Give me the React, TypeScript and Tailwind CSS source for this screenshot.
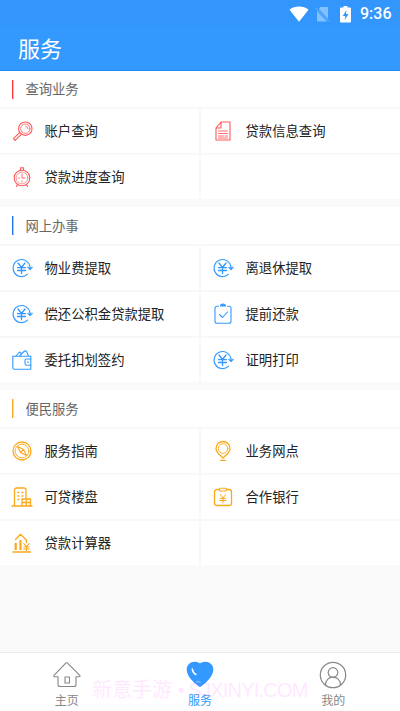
import React from 'react';

type IconName = 'search' | 'doc' | 'clock' | 'yen' | 'clip' | 'wallet' | 'compass' | 'pin' | 'building' | 'bank' | 'chart';

const shapes: Record<IconName, React.ReactNode> = {
  search: (
    <>
      <circle cx="14.3" cy="8.7" r="6.7" />
      <circle cx="14.3" cy="8.7" r="4.7" strokeWidth="0.8" />
      <path d="M14.5 6.2a2.6 2.6 0 0 1 2.5 2.6" strokeWidth="0.8" />
      <path d="M8.8 12.4 2.4 18.6l1.7 1.8 6.6-6.2" />
    </>
  ),
  doc: (
    <>
      <path d="M9 2h9v18H4V8zM9 2v6H4" />
      <path d="M6.5 11h9M6.5 13.5h9M6.5 16h5M13 16h2.5M6.5 18h9" strokeWidth="0.9" />
    </>
  ),
  clock: (
    <>
      <circle cx="11" cy="12" r="7.8" />
      <circle cx="11" cy="12" r="5.9" strokeWidth="0.6" />
      <path d="M9.5 4V1.8h3V4M6.5 18.5l-1 2M15.5 18.5l1 2" />
      <path d="M11 8v4h3M7.5 12h1M11 15v1" strokeWidth="0.9" />
    </>
  ),
  yen: (
    <>
      <path d="M19 10A8.5 8.5 0 1 0 16.5 17.2" />
      <path d="m16.5 10.5 2.6 2.6 2.4-2.6z" fill="currentColor" strokeWidth="0.6" />
      <path d="M7 6l3.5 4.5L14 6M6.5 10.7h8M6.5 13.5h8M10.5 10.5v6" strokeWidth="1.3" />
    </>
  ),
  clip: (
    <>
      <path d="M6.5 3.3H5A2 2 0 0 0 3 5.3v13a2 2 0 0 0 2 2h12a2 2 0 0 0 2-2v-13a2 2 0 0 0-2-2h-1.5" />
      <path d="M8.5 3h5a2.5 2 0 0 0-5 0z" fill="currentColor" />
      <path d="m7.5 11.5 3 3 5-5.5" />
    </>
  ),
  wallet: (
    <>
      <path d="M19.8 10V7.2h-18v11.5a1.5 1.5 0 0 0 1.5 1.5h16.500v-4" />
      <path d="M19.8 10H15.5a1.5 1.5 0 0 0-1.5 1.5v3.2a1.5 1.5 0 0 0 1.5 1.5h4.3zM16.5 13.1h.8" />
      <path d="m5 7 3.5-4 2.2 1.8M8.5 7 13 2.5c1-.8 1.7-.8 2.5 0L17.5 7" />
    </>
  ),
  compass: (
    <>
      <circle cx="11" cy="11" r="9" strokeWidth="1.3" />
      <circle cx="11" cy="11" r="6.9" strokeWidth="0.9" />
      <path d="m6.5 6.5 6 3 3 6-6-3zM9.5 12.5l3-3" />
    </>
  ),
  pin: (
    <>
      <path d="M9.5 16.5c-2-2-5.5-4-5.5-8a7 7 0 0 1 14 0c0 4-3.5 6-5.5 8L11 18zM8.500 20.300h5" strokeWidth="1.3" />
      <circle cx="11" cy="8.5" r="4.8" strokeWidth="0.9" />
    </>
  ),
  building: (
    <>
      <path d="M3.5 20V4a2 2 0 0 1 2-2H13a2 2 0 0 1 2 2v8M1 20h20M11 20v-7h8.5v7M11 16.5h8.5M15.2 13v7" strokeWidth="1.3" />
      <path d="M7 6.5h.8M11 6.5h.8M7 10h.8M11 10h.8M7 13.5h.8" strokeWidth="1.6" />
    </>
  ),
  bank: (
    <>
      <path d="M7.5 3.5H5A2.500 2.500 0 0 0 2.500 6v11A2.500 2.500 0 0 0 5 19.500h12a2.500 2.500 0 0 0 2.500-2.500V6A2.500 2.500 0 0 0 17 3.500h-2.500" strokeWidth="1.3" />
      <rect x="7.5" y="2.3" width="7" height="2.7" rx="1" />
      <path d="m8.3 8.5 2.7 3.5 2.7-3.5M8 12.3h6M8 14.5h6M11 12v5" strokeWidth="1" />
    </>
  ),
  chart: (
    <>
      <path d="M2 20h17.5" strokeWidth="1.4" />
      <path d="M4.7 18v-7M9.5 18V8" strokeWidth="2.2" strokeLinecap="butt" />
      <path d="M4.5 7.5 9.5 2.2l6 6v2.3" strokeWidth="1.3" />
      <path d="m12.7 11.5 2.7 3.2 2.8-3.2M12.7 15h5.5M12.7 17h5.5M15.4 14.5v4" />
    </>
  ),
};

function Icon({ name }: { name: IconName }) {
  return (
    <svg viewBox="0 0 22 22" className="h-[22px] w-[22px] shrink-0" fill="none" stroke="currentColor" strokeWidth="1.1" strokeLinecap="round" strokeLinejoin="round">
      {shapes[name]}
    </svg>
  );
}

type Item = [IconName, string] | null;

const sections: { title: string; bar: string; icon: string; header: string; items: Item[] }[] = [
  {
    title: '查询业务', bar: 'border-[#ff3b3b] bg-[#ff3b3b]/40', icon: 'text-[#ff5a5a]', header: 'h-9',
    items: [['search', '账户查询'], ['doc', '贷款信息查询'], ['clock', '贷款进度查询'], null],
  },
  {
    title: '网上办事', bar: 'border-[#1c78e0] bg-[#1c78e0]/40', icon: 'text-[#3399ff]', header: 'h-[37px]',
    items: [['yen', '物业费提取'], ['yen', '离退休提取'], ['yen', '偿还公积金贷款提取'], ['clip', '提前还款'], ['wallet', '委托扣划签约'], ['yen', '证明打印']],
  },
  {
    title: '便民服务', bar: 'border-[#fba91c] bg-[#fba91c]/40', icon: 'text-[#fba91c]', header: 'h-[37px]',
    items: [['compass', '服务指南'], ['pin', '业务网点'], ['building', '可贷楼盘'], ['bank', '合作银行'], ['chart', '贷款计算器'], null],
  },
];

function Cell({ item, color }: { item: Item; color: string }) {
  return (
    <div className="flex h-[45.9px] items-center border-t-2 border-[#f8f8f8] pl-[11px] odd:border-r-2">
      {item && (
        <>
          <span className={color}><Icon name={item[0]} /></span>
          <span className="ml-[11.5px] pt-[2px] text-[13.33px] leading-5 whitespace-nowrap text-[#222]">{item[1]}</span>
        </>
      )}
    </div>
  );
}

export default function App() {
  return (
    <div className="relative flex h-[711px] w-[400px] flex-col overflow-hidden bg-[#fafafa] font-['Roboto','Noto_Sans_CJK_SC',sans-serif]">
      <header className="h-[71px] shrink-0 border-b border-[#1f8bf7] bg-[#3399ff] text-white">
        <div className="flex h-[27px] items-center justify-end bg-[#3396fc] pr-[9px]">
          <svg viewBox="0 0 20 16" className="h-4 w-5" fill="currentColor">
            <path d="M10 15.8.5 3.7C5.5-.5 14.5-.5 19.5 3.7z" />
          </svg>
          <svg viewBox="0 0 15 16" className="ml-[6px] h-4 w-[15px]" fill="#84c1ff">
            <path d="M5.5 1H13v11.700L3.800 3zM2 5l9.900 10.500H3a1 1 0 0 1-1-1z" />
            <path d="m.8 2 13 13.3" stroke="#84c1ff" strokeWidth="0.8" />
          </svg>
          <svg viewBox="0 0 12 18" className="ml-[10px] h-[18px] w-3" fill="currentColor">
            <path fillRule="evenodd" d="M3.5 1h4v1.500H10a1 1 0 0 1 1 1v13a1 1 0 0 1-1 1H1a1 1 0 0 1-1-1v-13a1 1 0 0 1 1-1h2.500zM6.500 5 2.800 11h2.500l-.7 4L8.500 9H6z" />
          </svg>
          <span className="ml-[8px] w-[31px] text-[16px] leading-5 font-medium">9:36</span>
        </div>
        <h1 className="pt-[7px] pl-[18px] text-[22px] leading-8">服务</h1>
      </header>
      <main className="flex flex-1 flex-col gap-[8.5px]">
        {sections.map((s) => (
          <section key={s.title} className="bg-white">
            <div className={`flex items-center pl-[12.4px] ${s.header}`}>
              <span className={`h-[19px] w-[2px] border-l ${s.bar}`} />
              <h2 className="ml-[11px] pt-[2px] text-[13.33px] leading-5 text-[#666]">{s.title}</h2>
            </div>
            <div className="grid grid-cols-[201px_199px]">
              {s.items.map((item, i) => <Cell key={i} item={item} color={s.icon} />)}
            </div>
          </section>
        ))}
      </main>
      <nav className="grid h-[59px] shrink-0 grid-cols-3 border-t border-[#ebebeb] bg-white text-center text-[12px] leading-4 text-[#888]">
        <div className="flex flex-col items-center pt-[8px]">
          <svg viewBox="0 0 28 28" className="h-7 w-7" fill="none" stroke="currentColor" strokeWidth="1.1" strokeLinejoin="round">
            <path d="M14.3 1.8a1 1 0 0 0-1.300 0L1 14.300c-.5.800 0 1.500.8 1.500H5V23.500a2 2 0 0 0 2 2h14a2 2 0 0 0 2-2v-7.700h3c.9 0 1.300-.8.800-1.500zM12 16h4.500v6H12z" />
          </svg>
          <span className="mt-[4px]">主页</span>
        </div>
        <div className="flex flex-col items-center pt-[8px] text-[#3399ff]">
          <svg viewBox="0 0 28 28" className="h-7 w-7">
            <path fill="currentColor" d="M14 2.3C18-.6 24.500.5 26.600 5c3 7-3.700 15-11.400 20.400a2 2 0 0 1-2.400 0C5.100 20-1.600 12 1.400 5 3.500.5 10-.6 14 2.300z" />
            <path d="M6.300 8c.3 2.500 1.400 4.500 3.600 5.500" fill="none" stroke="white" strokeWidth="1.6" strokeLinecap="round" />
            <path d="M10 21.200c1.500-.7 3-.7 4.500 0" fill="none" stroke="white" strokeWidth="0.7" opacity="0.7" />
          </svg>
          <span className="mt-[4px]">服务</span>
        </div>
        <div className="flex flex-col items-center pt-[8px]">
          <svg viewBox="0 0 28 28" className="h-7 w-7" fill="none" stroke="currentColor" strokeWidth="1.2">
            <circle cx="14" cy="14" r="12.7" />
            <circle cx="14" cy="11.5" r="4.8" />
            <path d="M6.5 24c0-10.500 15-10.500 15 0" />
          </svg>
          <span className="mt-[4px]">我的</span>
        </div>
      </nav>
      <div className="pointer-events-none absolute top-[678px] left-[92px] text-[20px] leading-6 whitespace-nowrap text-[#ff66ff]/15 font-['Liberation_Sans','Noto_Sans_CJK_SC',sans-serif]">
        新意手游 <span className="tracking-[-0.8px]">• SJXINYI.COM</span>
      </div>
    </div>
  );
}
